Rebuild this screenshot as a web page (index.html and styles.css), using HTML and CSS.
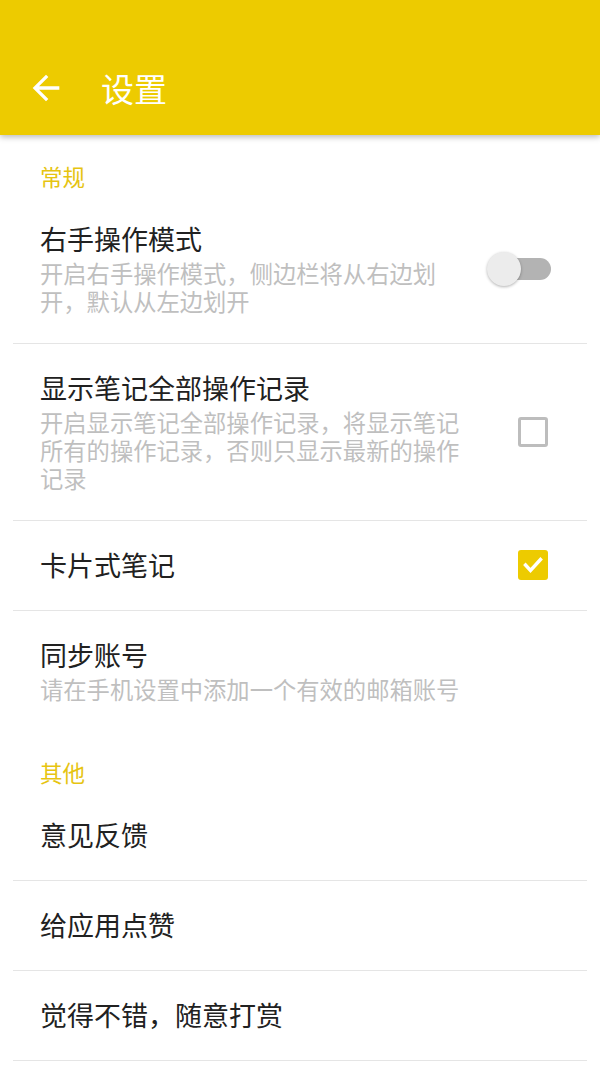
FILE: index.html
```html
<!DOCTYPE html>
<html lang="zh-CN">
<head>
<meta charset="utf-8">
<title>设置</title>
<link rel="stylesheet" href="styles.css">
</head>
<body>
<header class="appbar">
  <div class="toolbar">
    <svg class="back" viewBox="0 0 24 24" width="40" height="40"><path d="M20 11H7.83l5.59-5.59L12 4l-8 8 8 8 1.41-1.41L7.83 13H20v-2z" fill="#fff"/></svg>
    <h1 class="title">设置</h1>
  </div>
</header>
<main class="list">
  <div class="section">常规</div>
  <div class="item">
    <div class="text">
      <div class="label">右手操作模式</div>
      <div class="sub">开启右手操作模式，侧边栏将从右边划开，默认从左边划开</div>
    </div>
    <div class="ctrl">
      <div class="switch"><span class="track"></span><span class="thumb"></span></div>
    </div>
  </div>
  <div class="divider"></div>
  <div class="item">
    <div class="text">
      <div class="label">显示笔记全部操作记录</div>
      <div class="sub">开启显示笔记全部操作记录，将显示笔记所有的操作记录，否则只显示最新的操作记录</div>
    </div>
    <div class="ctrl"><span class="box"></span></div>
  </div>
  <div class="divider"></div>
  <div class="item">
    <div class="text"><div class="label">卡片式笔记</div></div>
    <div class="ctrl">
      <span class="box checked"><svg viewBox="0 0 30 30" width="30" height="30"><polyline points="7.5,15 12.5,20.5 22.5,9.5" fill="none" stroke="#fff" stroke-width="3.4" stroke-linecap="square"/></svg></span>
    </div>
  </div>
  <div class="divider"></div>
  <div class="item">
    <div class="text">
      <div class="label">同步账号</div>
      <div class="sub">请在手机设置中添加一个有效的邮箱账号</div>
    </div>
  </div>
  <div class="section">其他</div>
  <div class="item"><div class="text"><div class="label">意见反馈</div></div></div>
  <div class="divider"></div>
  <div class="item"><div class="text"><div class="label">给应用点赞</div></div></div>
  <div class="divider"></div>
  <div class="item"><div class="text"><div class="label">觉得不错，随意打赏</div></div></div>
  <div class="divider"></div>
</main>
</body>
</html>
```
FILE: styles.css
```css
* { box-sizing: border-box; }
html, body { margin: 0; padding: 0; background: #fff; }
body {
  font-family: "Noto Sans CJK SC", "Noto Sans", sans-serif;
  width: 600px;
  height: 1067px;
  overflow: hidden;
}
.appbar {
  background: #EDCB00;
  height: 135px;
  padding-top: 41px;
  box-shadow: 0 2px 6px rgba(0,0,0,0.28);
  position: relative;
  z-index: 1;
}
.toolbar {
  height: 94px;
  display: flex;
  align-items: center;
  padding-left: 26px;
}
.back { display: block; }
.title {
  margin: 0 0 0 35px;
  font-size: 33px;
  font-weight: 400;
  color: #fff;
  line-height: 40px;
}
.list { display: flex; flex-direction: column; }
.section {
  padding: 25px 40px 3px;
  line-height: 32px;
  font-size: 22.5px;
  color: #E6C411;
}
.item {
  display: flex;
  align-items: center;
  padding: 27px 49px 28px 40px;
}
.text { flex: 1; min-width: 0; }
.label {
  font-size: 27px;
  line-height: 34px;
  color: #212121;
}
.sub {
  margin-top: 3px;
  font-size: 23.3px;
  line-height: 28px;
  color: #bfbfbf;
}
.ctrl {
  width: 86px;
  flex: none;
  display: flex;
  justify-content: flex-end;
}
.divider {
  height: 1px;
  margin: 0 13px;
  background: #e5e5e5;
}
.switch {
  position: relative;
  width: 64px;
  height: 34px;
}
.track {
  position: absolute;
  left: 8px;
  top: 6px;
  width: 56px;
  height: 22px;
  border-radius: 11px;
  background: #b3b3b3;
}
.thumb {
  position: absolute;
  left: 0;
  top: 0;
  width: 34px;
  height: 34px;
  border-radius: 50%;
  background: #ececec;
  box-shadow: 0 1px 3px rgba(0,0,0,0.3);
}
.box {
  width: 30px;
  height: 30px;
  border: 3px solid #bdbdbd;
  border-radius: 3px;
  margin-right: 3px;
  display: block;
}
.box.checked {
  border: none;
  background: #EDCB00;
}
.box svg { display: block; }
```
